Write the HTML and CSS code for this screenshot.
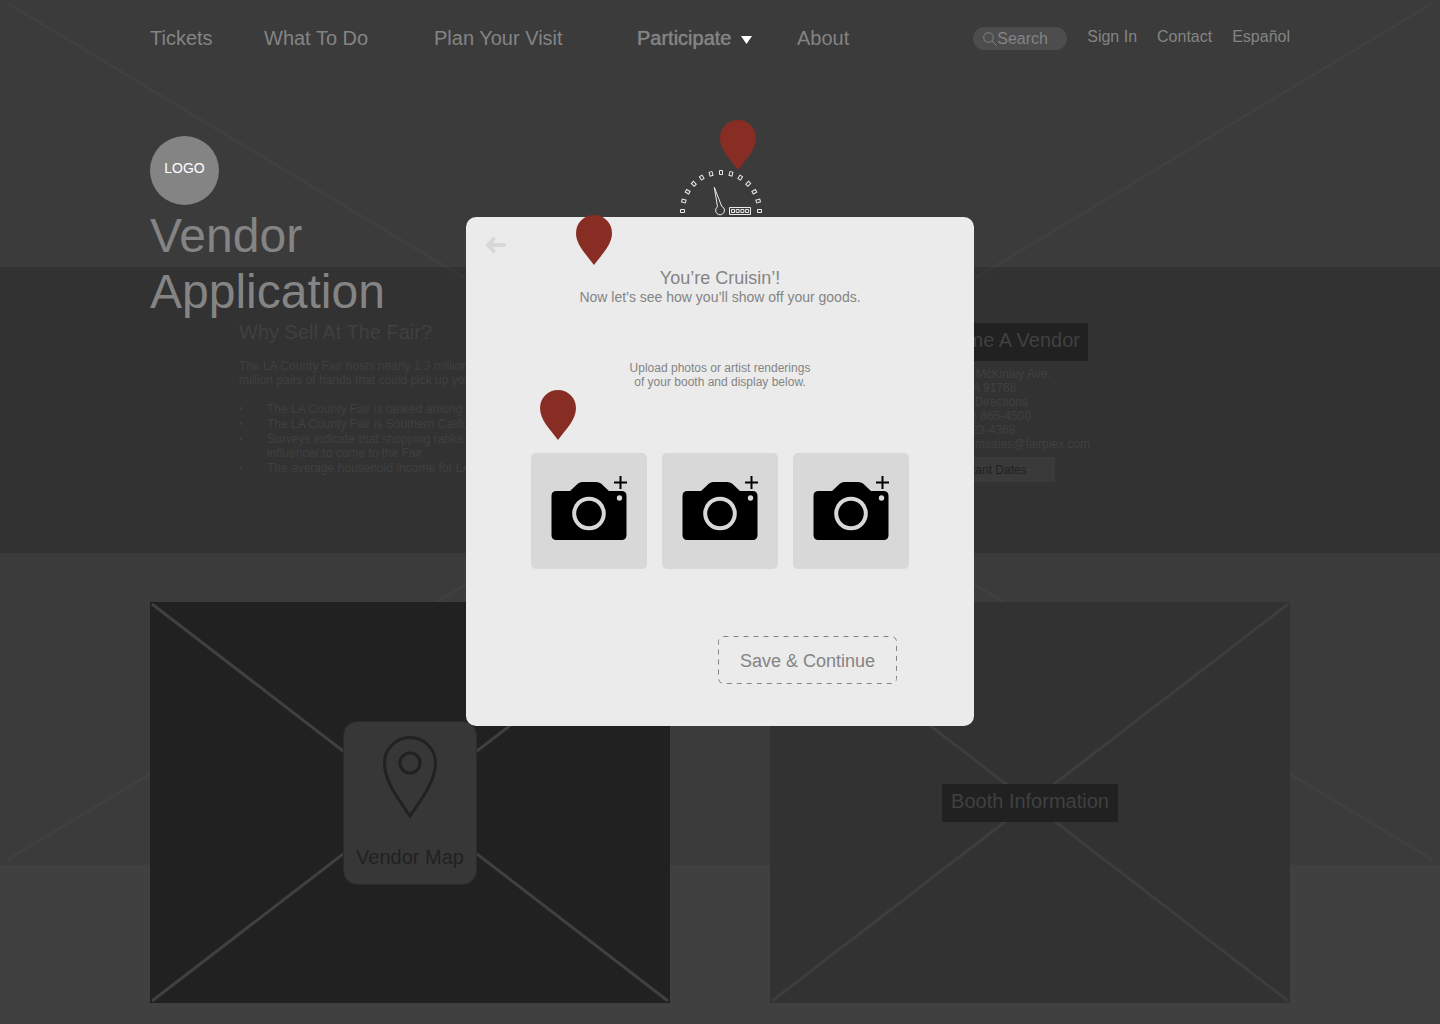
FILE: index.html
```html
<!DOCTYPE html>
<html lang="en">
<head>
<meta charset="utf-8">
<meta name="viewport" content="width=device-width, initial-scale=1">
<title>Vendor Application</title>
<link rel="stylesheet" href="styles.css">
</head>
<body>
<div class="page">
  <svg class="backdrop" viewBox="0 0 1440 865" preserveAspectRatio="none" aria-hidden="true">
    <path d="M7 3L1433 860M1433 3L7 860"/>
  </svg>

  <header class="hero">
    <div class="topbar">
      <nav aria-label="Main">
        <ul class="main-nav">
          <li><a href="#">Tickets</a></li>
          <li><a href="#">What To Do</a></li>
          <li><a href="#">Plan Your Visit</a></li>
          <li><a class="current" href="#">Participate<svg class="caret" viewBox="0 0 11 8" aria-hidden="true"><path d="M0 0h11L5.500 8z"/></svg></a></li>
          <li><a href="#">About</a></li>
        </ul>
      </nav>
      <div class="utility">
        <label class="search">
          <svg viewBox="0 0 14 14" aria-hidden="true"><circle cx="5.500" cy="5.500" r="4.800"/><path d="M9 9l4.500 4.500"/></svg>
          <input type="text" placeholder="Search" aria-label="Search">
        </label>
        <a href="#">Sign In</a>
        <a href="#">Contact</a>
        <a href="#">Español</a>
      </div>
    </div>
    <div class="logo">LOGO</div>
    <h1>Vendor<br>Application</h1>
  </header>

  <main>
    <section class="band">
      <div class="why">
        <h2>Why Sell At The Fair?</h2>
        <p>The LA County Fair hosts nearly 1.3 million<br>million pairs of hands that could pick up your</p>
        <ul>
          <li>The LA County Fair is ranked among</li>
          <li>The LA County Fair is Southern California</li>
          <li>Surveys indicate that shopping ranks<br>influencer to come to the Fair</li>
          <li>The average household income for LA</li>
        </ul>
      </div>
      <div class="contact">
        <h2>Become A Vendor</h2>
        <address>1101 W. McKinley Ave.<br>CA 91768<br><a href="#">Get Directions</a><br>(909) 865-4500<br>623-4368</address>
        <a class="email" href="#">msales@fairplex.com</a>
        <button class="dates" type="button">Important Dates</button>
      </div>
    </section>

    <section class="cards">
      <a class="card card-map" href="#">
        <svg class="cross" viewBox="0 0 520 401" preserveAspectRatio="none" aria-hidden="true"><path d="M2 2L518 399M518 2L2 399"/></svg>
        <span class="map-tile">
          <svg viewBox="0 0 54 82" aria-hidden="true"><path d="M27 80C17 65 1.500 46 1.500 27A25.500 25.500 0 0 1 52.500 27C52.500 46 37 65 27 80z"/><circle cx="27" cy="27" r="10"/></svg>
          Vendor Map
        </span>
      </a>
      <a class="card card-booth" href="#">
        <svg class="cross" viewBox="0 0 520 401" preserveAspectRatio="none" aria-hidden="true"><path d="M2 2L518 399M518 2L2 399"/></svg>
        <span class="booth-label">Booth Information</span>
      </a>
    </section>
  </main>

  <div class="overlay">
    <div class="modal" role="dialog" aria-labelledby="step-title">
      <svg class="gauge" viewBox="0 0 84 46" aria-hidden="true">
        <defs><path id="tick" d="M1.500 39.500h4v3h-4z"/></defs>
        <g>
          <use href="#tick"/>
          <use href="#tick" transform="rotate(15 42 41)"/>
          <use href="#tick" transform="rotate(30 42 41)"/>
          <use href="#tick" transform="rotate(45 42 41)"/>
          <use href="#tick" transform="rotate(60 42 41)"/>
          <use href="#tick" transform="rotate(75 42 41)"/>
          <use href="#tick" transform="rotate(90 42 41)"/>
          <use href="#tick" transform="rotate(105 42 41)"/>
          <use href="#tick" transform="rotate(120 42 41)"/>
          <use href="#tick" transform="rotate(135 42 41)"/>
          <use href="#tick" transform="rotate(150 42 41)"/>
          <use href="#tick" transform="rotate(165 42 41)"/>
          <use href="#tick" transform="rotate(180 42 41)"/>
          <path d="M38.500 36.800L35.300 17.300L42.700 36.300A4.400 4.400 0 1 1 38.500 36.800z"/>
          <path d="M50.500 37.500h21v7h-21zM52.500 39.500h3v3h-3zM57.200 39.500h3v3h-3zM61.900 39.500h3v3h-3zM66.600 39.500h3v3h-3z"/>
        </g>
      </svg>
      <svg class="pin pin-gauge" viewBox="0 0 36 50" aria-hidden="true"><path d="M18 50C10 39 0 30 0 18A18 18 0 0 1 36 18C36 30 26 39 18 50z"/></svg>
      <svg class="pin pin-top" viewBox="0 0 36 50" aria-hidden="true"><path d="M18 50C10 39 0 30 0 18A18 18 0 0 1 36 18C36 30 26 39 18 50z"/></svg>
      <svg class="pin pin-photo" viewBox="0 0 36 50" aria-hidden="true"><path d="M18 50C10 39 0 30 0 18A18 18 0 0 1 36 18C36 30 26 39 18 50z"/></svg>

      <button class="back" type="button" aria-label="Back">
        <svg viewBox="0 0 21 16" aria-hidden="true"><path d="M18 8H3M7.500 2L2 8l5.500 6"/></svg>
      </button>
      <h2 id="step-title">You’re Cruisin’!</h2>
      <p class="lead">Now let’s see how you’ll show off your goods.</p>
      <p class="hint">Upload photos or artist renderings<br>of your booth and display below.</p>

      <svg class="symbols" aria-hidden="true">
        <symbol id="camera" viewBox="0 0 76 65">
          <path d="M5.500 15H19l8-7.500q2-1.500 4-1.500h14q3 0 5 1.500l8 7.500h12.500q5 0 5 5v39q0 5-5 5h-65q-5 0-5-5v-39q0-5 5-5z"/>
          <circle class="lens" cx="38" cy="37.500" r="14.800"/>
          <circle class="flash" cx="68.500" cy="22" r="2.700"/>
          <path class="plus" d="M69.500 0v13M63 6.500h13"/>
        </symbol>
      </svg>
      <div class="uploads">
        <button type="button" aria-label="Add photo 1"><svg viewBox="0 0 76 65"><use href="#camera"/></svg></button>
        <button type="button" aria-label="Add photo 2"><svg viewBox="0 0 76 65"><use href="#camera"/></svg></button>
        <button type="button" aria-label="Add photo 3"><svg viewBox="0 0 76 65"><use href="#camera"/></svg></button>
      </div>

      <button class="save" type="button">
        <svg viewBox="0 0 179 48" aria-hidden="true"><rect x="0.500" y="0.500" width="178" height="47" rx="5"/></svg>
        Save &amp; Continue
      </button>
    </div>
  </div>
</div>
</body>
</html>
```
FILE: styles.css
```css
* {
  box-sizing: border-box;
}

body {
  margin: 0;
  background: #404040;
  color: #848484;
  font-family: "Liberation Sans", Arial, sans-serif;
}

h1, h2, p, ul {
  margin: 0;
  padding: 0;
  font-weight: 400;
}

ul {
  list-style: none;
}

a {
  color: inherit;
  text-decoration: none;
}

button, input {
  border: 0;
  padding: 0;
  background: none;
  color: inherit;
  font: inherit;
}

button {
  cursor: pointer;
}

svg {
  display: block;
  fill: none;
}

.page {
  position: relative;
  isolation: isolate;
}

.backdrop {
  position: absolute;
  z-index: -1;
  top: 0;
  left: 0;
  width: 100%;
  height: 865px;
  background: #3b3b3b;
  stroke: #404040;
  stroke-width: 3;
}

/* Header */

.hero {
  position: relative;
  z-index: 1;
  padding: 26px 150px 0;
}

.topbar {
  display: flex;
  justify-content: space-between;
  align-items: flex-start;
  margin-bottom: 86px;
}

.main-nav {
  display: grid;
  grid-template-columns: 114px 170px 203px 160px auto;
  font-size: 20px;
  line-height: 24px;
}

.main-nav a {
  display: inline-flex;
  align-items: center;
  gap: 9px;
}

.current {
  text-shadow: 0 0 1px #848484;
}

.caret {
  width: 11px;
  height: 8px;
  margin-top: 4px;
  fill: #fff;
}

.utility {
  display: flex;
  gap: 20px;
  line-height: 22px;
}

.search {
  display: flex;
  align-items: center;
  width: 94px;
  height: 23px;
  margin-top: 1px;
  padding-left: 10px;
  border-radius: 12px;
  background: #4d4d4d;
}

.search svg {
  flex: none;
  width: 14px;
  height: 14px;
  stroke: #848484;
}

.search input {
  width: 60px;
  height: 23px;
  outline: 0;
}

.search input::placeholder {
  color: #848484;
}

.logo {
  display: grid;
  place-items: center;
  width: 69px;
  height: 69px;
  padding-bottom: 5px;
  border-radius: 50%;
  background: #848484;
  color: #fff;
  font-size: 14px;
}

h1 {
  margin: 3px 0 -53px;
  font-size: 48px;
  line-height: 56px;
}

/* Information band */

.band {
  display: flex;
  justify-content: space-between;
  align-items: flex-start;
  padding: 53px 350px 71px 239px;
  background: rgba(0, 0, 0, 0.15);
  color: #404040;
  font-size: 12px;
  line-height: 14px;
}

.band h2 {
  font-size: 20px;
  line-height: 24px;
}

.why p {
  margin: 15px 0;
}

.why ul {
  display: grid;
  gap: 1px;
}

.why li {
  display: grid;
  grid-template-columns: 28px auto;
}

.why li::before {
  content: "•";
  font-size: 10px;
}

.contact {
  display: flex;
  flex-direction: column;
  align-items: flex-start;
  width: 177px;
  padding-top: 3px;
}

.contact h2 {
  padding: 5px 8px 9px;
  background: #212121;
  white-space: nowrap;
}

.contact address {
  width: 154px;
  margin-top: 6px;
  font-style: normal;
  text-align: center;
}

.email {
  align-self: flex-end;
}

.dates {
  width: 142px;
  height: 25px;
  margin-top: 6px;
  background: #3a3a3a;
  color: #212121;
}

/* Cards */

.cards {
  display: grid;
  grid-template-columns: 1fr 1fr;
  gap: 100px;
  padding: 49px 150px 21px;
  font-size: 20px;
  line-height: 24px;
}

.card {
  display: grid;
  place-items: center;
  min-height: 401px;
}

.card > * {
  grid-area: 1 / 1;
}

.cross {
  width: 100%;
  height: 100%;
  stroke-width: 3;
}

.card-map {
  background: #212121;
  color: #212121;
}

.card-map .cross {
  stroke: #404040;
}

.card-booth {
  background: #323232;
  color: #404040;
}

.card-booth .cross {
  stroke: #3d3d3d;
}

.map-tile {
  display: flex;
  flex-direction: column;
  align-items: center;
  gap: 27px;
  width: 134px;
  padding: 14px 0 15px;
  border: 1px solid #2a2a2a;
  border-radius: 14px;
  background: #373737;
}

.map-tile svg {
  width: 54px;
  height: 82px;
  stroke: #212121;
  stroke-width: 3;
}

.booth-label {
  padding: 5px 9px 9px;
  background: #212121;
}

/* Dialog */

.overlay {
  position: absolute;
  z-index: 2;
  top: 217px;
  left: 0;
  right: 0;
  display: flex;
  justify-content: center;
}

.modal {
  position: relative;
  display: flex;
  flex-direction: column;
  align-items: center;
  width: 508px;
  padding: 20px 20px 42px;
  border-radius: 10px;
  background: #ebebeb;
  text-align: center;
}

.back {
  align-self: flex-start;
}

.back svg {
  width: 21px;
  height: 16px;
  stroke: #d8d8d8;
  stroke-width: 4;
  stroke-linecap: round;
  stroke-linejoin: round;
}

.modal h2 {
  margin-top: 15px;
  font-size: 18px;
  line-height: 20px;
}

.lead {
  font-size: 14px;
  line-height: 18px;
}

.hint {
  margin-top: 55px;
  font-size: 12px;
  line-height: 14px;
}

.symbols {
  position: absolute;
  width: 0;
  height: 0;
}

.uploads {
  display: flex;
  gap: 15px;
  margin-top: 64px;
}

.uploads button {
  display: grid;
  justify-items: center;
  align-items: start;
  width: 116px;
  height: 116px;
  padding-top: 23px;
  border-radius: 5px;
  background: #d8d8d8;
}

.uploads svg {
  width: 76px;
  height: 65px;
  fill: #000;
}

.lens {
  stroke: #d8d8d8;
  stroke-width: 4;
}

.flash {
  fill: #d8d8d8;
}

.plus {
  stroke: #000;
  stroke-width: 2;
}

.save {
  position: relative;
  align-self: flex-end;
  width: 179px;
  height: 48px;
  margin: 67px 57px 0 0;
  padding-top: 2px;
  font-size: 18px;
}

.save svg {
  position: absolute;
  inset: 0;
  stroke: #848484;
  stroke-dasharray: 5 5;
}

.pin {
  position: absolute;
  width: 36px;
  height: 50px;
  fill: #882d23;
}

.pin-gauge {
  top: -97px;
  left: 254px;
}

.pin-top {
  top: -2px;
  left: 110px;
}

.pin-photo {
  top: 173px;
  left: 74px;
}

.gauge {
  position: absolute;
  top: -47px;
  left: 213px;
  width: 84px;
  height: 46px;
  stroke: #ebebeb;
}
```
